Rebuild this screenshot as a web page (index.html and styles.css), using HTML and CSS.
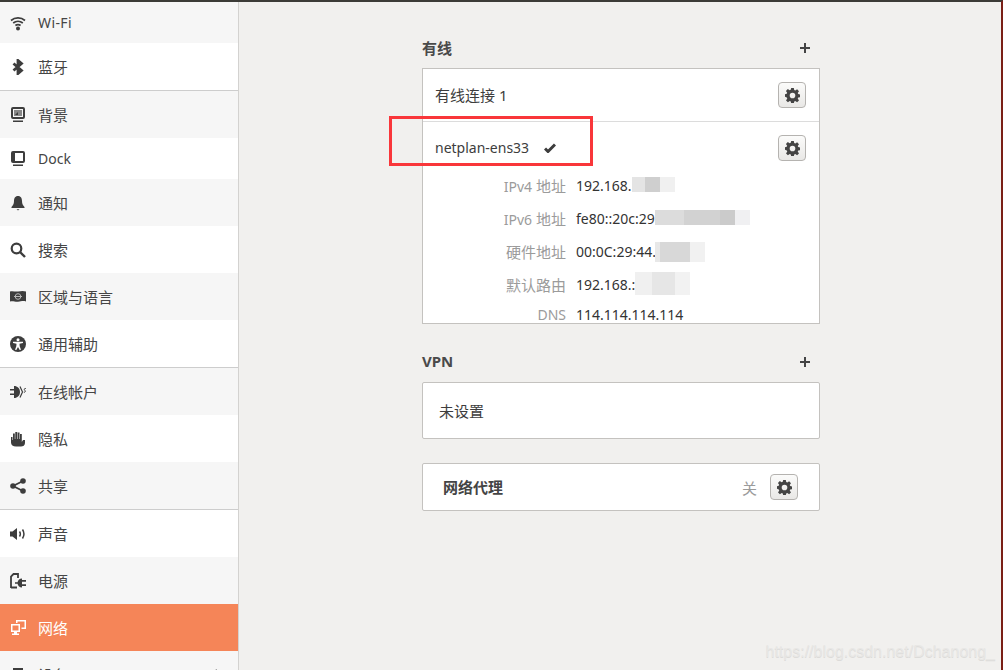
FILE: index.html
```html
<!DOCTYPE html>
<html lang="zh-CN">
<head>
  <meta charset="UTF-8" />
  <title>网络</title>
  <link rel="stylesheet" href="styles.css">
</head>

<body>
  <svg class="defs" width="0" height="0">
    <symbol id="gear" viewBox="0 0 16 16">
      <path fill="#444" fill-rule="evenodd" d="M6.600 0h2.800l.4 2.200 1.200.5 1.900-1.300 2 2-1.300 1.900.5 1.200 2.200.4v2.800l-2.200.4-.5 1.200 1.300 1.900-2 2-1.900-1.300-1.200.5-.4 2.200H6.600l-.4-2.200-1.200-.5-1.900 1.300-2-2 1.300-1.900-.5-1.200L0 9.400V6.600l1.800-.4.500-1.200L1 3.100l2-2 1.900 1.300 1.200-.5zM8 5a3 3 0 1 0 0 6 3 3 0 0 0 0-6z"/>
    </symbol>
    <symbol id="plus" viewBox="0 0 10 10">
      <path fill="#444" d="M4 0h2v4h4v2H6v4H4V6H0V4h4z"/>
    </symbol>
  </svg>

  <div class="window">
    <nav class="sidebar">
      <div class="item tall grey">
        <svg class="icon" viewBox="0 0 16 16"><path fill="none" stroke="#3d3d3d" stroke-width="1.700" d="M1 5.500c4-3.400 10-3.400 14 0M3.200 8c2.800-2.300 6.800-2.300 9.600 0M5.400 10.500c1.500-1.100 3.700-1.100 5.200 0"/><circle cx="8" cy="13.500" r="2" fill="#3d3d3d"/></svg>
        <span class="wifi">Wi-Fi</span>
      </div>
      <div class="item full white sep">
        <svg class="icon" viewBox="0 0 16 16"><path fill="none" stroke="#3d3d3d" stroke-width="2.800" d="M3.500 4.500l8 7-3.500 3V1.500l3.500 3-8 7"/></svg>
        <span>蓝牙</span>
      </div>
      <div class="item full grey">
        <svg class="icon" viewBox="0 0 16 16"><path fill="#3d3d3d" fill-rule="evenodd" d="M3 0h10a2 2 0 0 1 2 2v8a2 2 0 0 1-2 2H3a2 2 0 0 1-2-2V2a2 2 0 0 1 2-2zm0 2v8h10V2zM3 13.500h10V15H3z"/><path fill="#888" d="M4 3h8v6H4z"/><path fill="#3d3d3d" d="M5 8l3-3v3z"/></svg>
        <span>背景</span>
      </div>
      <div class="item tall white">
        <svg class="icon" viewBox="0 0 16 16"><path fill="#3d3d3d" fill-rule="evenodd" d="M3 0h10a2 2 0 0 1 2 2v8a2 2 0 0 1-2 2H3a2 2 0 0 1-2-2V2a2 2 0 0 1 2-2zm2 2v8h8V2zM3 13.500h10V15H3z"/></svg>
        <span class="latin">Dock</span>
      </div>
      <div class="item full grey">
        <svg class="icon" viewBox="0 0 16 16"><path fill="#3d3d3d" d="M8 1c3 0 4 2.500 4 5 0 3 1 4.500 2.500 6v1h-13v-1C3 10.500 4 9 4 6c0-2.500 1-5 4-5zM6.500 14.300h3L8 15.500z"/></svg>
        <span>通知</span>
      </div>
      <div class="item full white">
        <svg class="icon" viewBox="0 0 16 16"><circle cx="6.500" cy="6.500" r="4.800" fill="none" stroke="#3d3d3d" stroke-width="2.200"/><path stroke="#3d3d3d" stroke-width="2.400" d="M10 10l5 5"/></svg>
        <span>搜索</span>
      </div>
      <div class="item full grey">
        <svg class="icon" viewBox="0 0 16 16"><path fill="#3d3d3d" d="M0 2.500c3-1 5 .5 8 0s5-1 8 0v10c-3-1-5 0-8 .3s-5-1.300-8-.3z"/><circle cx="8" cy="7.500" r="2.800" fill="none" stroke="#b5b5b5"/><path stroke="#b5b5b5" d="M4 7.500h8"/></svg>
        <span>区域与语言</span>
      </div>
      <div class="item full white sep">
        <svg class="icon" viewBox="0 0 16 16"><circle cx="8" cy="8" r="8" fill="#3d3d3d"/><circle cx="8" cy="3.800" r="1.500" fill="#fff"/><path fill="#fff" d="M3 5.700h10v1.300l-3.500.8.200 2.500 1.300 3.400-1.300.4L8 11l-1.700 3.100-1.300-.4 1.300-3.400.2-2.500L3 7z"/></svg>
        <span>通用辅助</span>
      </div>
      <div class="item full grey">
        <svg class="icon" viewBox="0 0 16 16"><path fill="#3d3d3d" d="M4 2c3.500 0 6 2.500 6 6s-2.500 6-6 6v-3H0V9.500h4v-3H0V5h4z"/><path fill="none" stroke="#3d3d3d" stroke-width="1.200" d="M10 2.500l2.500 5.500-2.500 5.500"/><path fill="none" stroke="#3d3d3d" d="M15.800 4.500c-1.500-.5-2 1-1 1.800s.5 2.500-1 1.800"/></svg>
        <span>在线帐户</span>
      </div>
      <div class="item full white">
        <svg class="icon" viewBox="0 0 16 16"><path fill="#3d3d3d" d="M1 6h1.500v3h.5V2.500h1.800V8h.5V1h1.900v7h.5V1.500h1.800V8h.5V3h1.800v8l1.200-2H15v3c0 2.500-2 3.500-4 3.500H6C3 15.500 1 14 1 11.500z"/></svg>
        <span>隐私</span>
      </div>
      <div class="item full grey sep">
        <svg class="icon" viewBox="0 0 16 16"><path fill="none" stroke="#3d3d3d" stroke-width="1.800" d="M13 3L3 8l10 5"/><circle cx="13" cy="3" r="2.800" fill="#3d3d3d"/><circle cx="3" cy="8" r="2.800" fill="#3d3d3d"/><circle cx="13" cy="13" r="2.800" fill="#3d3d3d"/></svg>
        <span>共享</span>
      </div>
      <div class="item full white">
        <svg class="icon" viewBox="0 0 16 16"><path fill="#3d3d3d" d="M0 5.500h2.500L7 2v12l-4.500-3.500H0z"/><path fill="none" stroke="#3d3d3d" stroke-width="1.500" d="M9.500 5.500c1 1.500 1 3.500 0 5M12.500 3.500c1.800 2.800 1.800 6.200 0 9"/></svg>
        <span>声音</span>
      </div>
      <div class="item full grey">
        <svg class="icon" viewBox="0 0 16 16"><path fill="none" stroke="#3d3d3d" stroke-width="1.800" d="M1 15V3.500L3.500 1h4.500v4M1 14.500h6"/><path fill="#3d3d3d" d="M7.500 10c0-2.500 2-4.500 4.500-4.500v9c-2.500 0-4.500-2-4.500-4.500zM12 7h4v1.800h-4zM12 11.200h4V13h-4zM5 9.200h3v1.600H5z"/></svg>
        <span>电源</span>
      </div>
      <div class="item full active">
        <svg class="icon" viewBox="0 0 16 16"><path fill="#fff" fill-rule="evenodd" d="M1 4h9v8H7v1.500h2V15H2v-1.500h2V12H1zm1.500 1.500v5h6v-5z"/><path fill="#fff" d="M6 0h10v9h-4.500V7.500h3V1.500H7.500V3H6z"/></svg>
        <span>网络</span>
      </div>
      <div class="item full grey">
        <svg class="icon" viewBox="0 0 16 16"><path fill="#3d3d3d" d="M3 1h10v2H3z"/></svg>
        <span>设备</span>
        <svg class="chevron" viewBox="0 0 8 12"><path fill="none" stroke="#3d3d3d" stroke-width="2" d="M1.500 1l5 5-5 5"/></svg>
      </div>
    </nav>

    <main class="content">
      <div class="column">
        <div class="heading">
          <h2>有线</h2>
          <svg class="plus"><use href="#plus"/></svg>
        </div>
        <section class="card wired">
          <div class="conn first">
            <span class="conn-name">有线连接 1</span>
            <button class="gear-btn"><svg><use href="#gear"/></svg></button>
          </div>
          <div class="conn second">
            <span class="conn-name latin">netplan-ens33</span>
            <svg class="check" viewBox="0 0 12 10"><path fill="none" stroke="#3d3d3d" stroke-width="3" d="M1 5.500l3 3L11 1.500"/></svg>
            <button class="gear-btn"><svg><use href="#gear"/></svg></button>
          </div>
          <div class="details">
            <div class="detail">
              <span class="label"><span class="latin">IPv4</span> 地址</span><span class="value">192.168.</span>
              <i class="blur blur-v4"></i>
            </div>
            <div class="detail">
              <span class="label"><span class="latin">IPv6</span> 地址</span><span class="value">fe80::20c:29</span>
              <i class="blur blur-v6"></i>
            </div>
            <div class="detail">
              <span class="label">硬件地址</span><span class="value">00:0C:29:44.</span>
              <i class="blur blur-hw"></i>
            </div>
            <div class="detail">
              <span class="label">默认路由</span><span class="value">192.168.:</span>
              <i class="blur blur-gw"></i>
            </div>
            <div class="detail last">
              <span class="label latin">DNS</span><span class="value">114.114.114.114</span>
            </div>
          </div>
        </section>

        <div class="heading vpn-heading">
          <h2>VPN</h2>
          <svg class="plus"><use href="#plus"/></svg>
        </div>
        <section class="card vpn">未设置</section>

        <section class="card proxy">
          <strong class="proxy-name">网络代理</strong>
          <span class="off">关</span>
          <button class="gear-btn"><svg><use href="#gear"/></svg></button>
        </section>
      </div>
    </main>
  </div>

  <div class="highlight"></div>
  <div class="watermark">https://blog.csdn.net/Dchanong_</div>
</body>
</html>
```

FILE: styles.css
```css
html, body {
  margin: 0;
  padding: 0;
  height: 670px;
  overflow: hidden;
}

body {
  position: relative;
  background-color: #f1f0ee;
  font-family: "Noto Sans", "Noto Sans CJK SC", sans-serif;
  font-size: 15px;
  color: #3d3d3d;
  border-top: 2px solid #3c3b37;
  border-right: 2px solid #7a1f16;
  box-sizing: border-box;
}

.defs {
  position: absolute;
}

.latin {
  font-size: 14px;
}

.window {
  display: flex;
  height: 668px;
}

/* sidebar */
.sidebar {
  width: 238px;
  flex: none;
  border-right: 1px solid #d3d2d0;
  overflow: hidden;
}

.item {
  display: flex;
  align-items: center;
  padding-left: 10px;
  box-sizing: border-box;
}

.item span {
  margin-left: 12px;
  color: #454545;
}

.item .wifi {
  font-size: 14px;
  letter-spacing: 0.4px;
}

.tall {
  height: 41px;
}

.full {
  height: 47px;
}

.sep {
  height: 48px;
  border-bottom: 1px solid #cdcdcd;
}

.grey {
  background-color: #f6f6f6;
}

.white {
  background-color: #fff;
}

.active {
  background-color: #f58558;
}

.item.active span {
  color: #fff;
}

.icon {
  width: 16px;
  height: 16px;
  flex: none;
}

.chevron {
  width: 8px;
  height: 12px;
  margin-left: auto;
  margin-right: 16px;
}

/* content */
.content {
  flex: 1;
  display: flex;
  justify-content: center;
}

.column {
  width: 398px;
  margin-left: 2px;
}

.heading {
  display: flex;
  justify-content: space-between;
  align-items: center;
  height: 24px;
  margin-top: 34px;
  margin-bottom: 8px;
}

.heading h2 {
  margin: 0 0 2px;
  font-size: 15px;
  font-weight: 700;
  color: #4a4a4a;
}

.plus {
  width: 10px;
  height: 10px;
  margin-right: 10px;
}

.vpn-heading {
  margin-top: 26px;
  margin-bottom: 8px;
}

.card {
  background-color: #fff;
  border: 1px solid #c4c2bf;
  box-sizing: border-box;
}

.wired {
  height: 256px;
  overflow: hidden;
}

.conn {
  display: flex;
  align-items: center;
  padding: 0 13px 0 12px;
  box-sizing: border-box;
}

.first {
  height: 53px;
  border-bottom: 1px solid #dcdcdc;
}

.second {
  height: 47px;
  padding-top: 5px;
}

.conn-name {
  margin-bottom: 2px;
}

.check {
  width: 12px;
  height: 10px;
  margin-left: 15px;
}

.gear-btn {
  width: 28px;
  height: 26px;
  margin: 0 0 0 auto;
  padding: 0;
  display: flex;
  align-items: center;
  justify-content: center;
  background: linear-gradient(#fbfbfa, #e9e8e6);
  border: 1px solid #b5b3b0;
  border-radius: 4px;
}

.gear-btn svg {
  width: 15px;
  height: 15px;
}

.detail {
  position: relative;
  display: flex;
  align-items: center;
  height: 33px;
}

.detail.last {
  height: 27px;
}

.label {
  width: 143px;
  text-align: right;
  color: #9b9b9b;
  flex: none;
}

.value {
  margin-left: 10px;
  font-size: 14px;
  color: #333;
}

/* smudged out addresses */
.blur {
  position: absolute;
  display: block;
}

.blur-v4 {
  left: 209px;
  top: 8px;
  width: 43px;
  height: 15px;
  background: linear-gradient(90deg, #e4e4e4 0 30%, #cfcfcf 30% 65%, #f0f0f0 65%);
}

.blur-v6 {
  left: 232px;
  top: 8px;
  width: 95px;
  height: 15px;
  background: linear-gradient(90deg, #dcdcdc 0 30%, #d2d2d2 30% 68%, #cbcbcb 68% 84%, #f0f0f2 84%);
}

.blur-hw {
  left: 232px;
  top: 7px;
  width: 50px;
  height: 20px;
  background: linear-gradient(90deg, #e8e8e8 0 10%, #d8d8d8 10% 70%, #f1f1f1 70%);
}

.blur-gw {
  left: 212px;
  top: 4px;
  width: 55px;
  height: 23px;
  background: linear-gradient(90deg, #f0f0f0 0 30%, #e6e6e6 30% 72%, #f2f2f2 72%);
}

.vpn {
  height: 57px;
  display: flex;
  align-items: center;
  padding-left: 16px;
  border-radius: 2px;
}

.proxy {
  height: 48px;
  margin-top: 24px;
  display: flex;
  align-items: center;
  padding: 0 21px 0 20px;
  border-radius: 2px;
}

.proxy-name {
  color: #444;
  margin-bottom: 2px;
}

.off {
  margin-left: auto;
  margin-right: 13px;
  color: #9b9b9b;
}

.proxy .gear-btn {
  margin-left: 0;
}

/* annotation drawn on top of the screenshot */
.highlight {
  position: absolute;
  left: 389px;
  top: 114px;
  width: 204px;
  height: 50px;
  border: 3px solid #f9363a;
  box-sizing: border-box;
}

.watermark {
  position: absolute;
  right: 6px;
  bottom: 9px;
  font-family: "Liberation Sans", sans-serif;
  font-size: 16px;
  color: #e8e7e5;
  text-shadow: 0 1px 0 #dcdbd9;
}
```
